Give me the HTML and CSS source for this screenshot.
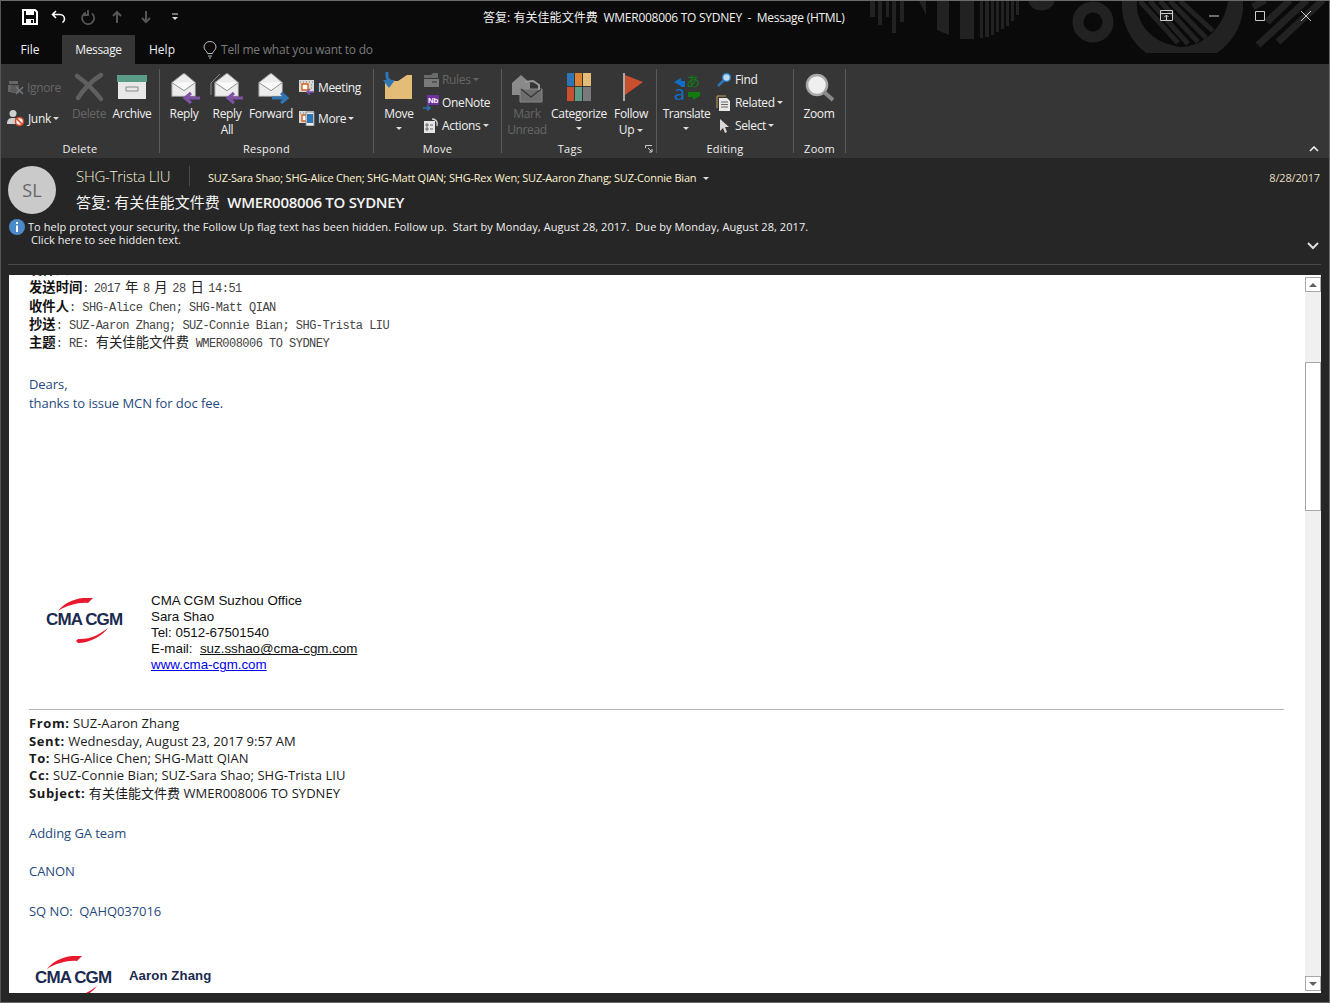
FILE: index.html
```html
<!DOCTYPE html>
<html>
<head>
<meta charset="utf-8">
<title>答复: 有关佳能文件费 WMER008006 TO SYDNEY - Message (HTML)</title>
<link rel="stylesheet" href="styles.css">
</head>
<body>
<svg class="defs" width="0" height="0">
  <defs>
    <symbol id="env" viewBox="0 0 32 32">
      <path d="M1 13 15 2h2l13 11v17H1z" fill="#ececec" stroke="#8a8a8a" stroke-width="1.200"/>
      <path d="M1 13l15 10 14-10" fill="#fafafa" stroke="#8a8a8a" stroke-width="1.200"/>
    </symbol>
    <symbol id="mini" viewBox="0 0 16 16">
      <path d="M0 1h15v12H0z" fill="#d8d8d8"/>
      <path d="M3 5h6v6H3z" fill="#fff" stroke="#d0641e" stroke-width="1.400"/>
      <path d="M1 3h1M4 3h1M7 3h1M10 3h1M13 3h1M12 6h1M12 9h1" stroke="#777"/>
    </symbol>
    <symbol id="cmark" viewBox="0 0 80 48">
      <path d="M13 15C18 8 28 3 38 2L48 2 43 7C35 6 22 9 13 15z" fill="#e8192c"/>
      <path d="M31 45 33 47C45 47 57 40 63 32 55 38 45 44 33 43z" fill="#e8192c"/>
    </symbol>
  </defs>
</svg>
<div class="window">
  <div class="titlebar">
    <svg class="decor" width="470" height="64" viewBox="0 0 470 64">
      <g fill="#222">
        <path d="M10 1h5v16h-5zM18 1h4v24h-4zM26 1h3v16h-3zM32 1h4v32h-4zM40 1h4v21h-4z"/>
        <path d="M59 1h7v14zM77 1h12v34l-12-5zM100 1h14v38h-14zM120 1h3v37h-3zM125 1h4v36h-4zM131 1h3v34h-3zM136 1h3v31h-3zM141 1h3v28h-3zM146 1h3v25h-3zM151 1h3v20h-3zM156 1h3v14h-3z"/>
        <path d="M168 1h27a14 13 0 0 1-27 0z"/>
        <path d="M262 1h121v10a60 60 0 0 1-26 42h-71a60 60 0 0 1-24-52zM277 1C275 20 288 42 320 47 345 47 365 25 368 1z" fill-rule="evenodd"/>
      </g>
      <g stroke="#222" stroke-width="5" fill="none">
        <path d="M280 1l38 42M290 1l38 43M300 1l38 41M310 1l36 37M320 1l33 30"/>
      </g>
      <circle cx="233" cy="22" r="15" fill="none" stroke="#222" stroke-width="11"/>
      <g stroke="#222" stroke-width="7" fill="none">
        <path d="M393 7l12-7M407 22l23-22M398 45l49-45M418 42l45-42"/>
      </g>
    </svg>
    <div class="qat">
      <svg width="16" height="16" viewBox="0 0 16 16"><path d="M1 1h12l2 2v12H1z" fill="none" stroke="#fff" stroke-width="2"/><path d="M4 1h8v5H4zM4 10h8v5H4z" fill="#fff"/><path d="M9 11h2v3H9z" fill="#0a0a0a"/></svg>
      <svg width="16" height="16" viewBox="0 0 16 16"><path d="M5 2 1.500 5.500 5 9M2 5.500h7a4.500 4.500 0 0 1 4.500 4.500 4 4 0 0 1-2 3.500" fill="none" stroke="#fff" stroke-width="1.600"/></svg>
      <svg width="16" height="16" viewBox="0 0 16 16"><path d="M10 3.500a6 6 0 1 1-6 1M8 1v5h5" fill="none" stroke="#555" stroke-width="1.800" transform="matrix(-1 0 0 1 16 0)"/></svg>
      <svg width="16" height="16" viewBox="0 0 16 16"><path d="M8 14V3M4 7l4-4 4 4" fill="none" stroke="#555" stroke-width="2"/></svg>
      <svg width="16" height="16" viewBox="0 0 16 16"><path d="M8 2v11M4 9l4 4 4-4" fill="none" stroke="#555" stroke-width="2"/></svg>
      <svg width="16" height="16" viewBox="0 0 16 16"><path d="M5 5h6" stroke="#ddd"/><path d="M5 8h6l-3 3z" fill="#ddd"/></svg>
    </div>
    <div class="title-text"><span class="title-cn">答复: 有关佳能文件费</span>&nbsp; WMER008006 TO SYDNEY&nbsp; -&nbsp; Message (HTML)</div>
    <div class="winbtns">
      <svg width="14" height="12" viewBox="0 0 14 12"><path d="M.5.500h12v10H.500zM.5 3.500h12M6.500 10V5M4.500 7l2-2 2 2" fill="none" stroke="#ccc"/></svg>
      <svg width="12" height="12" viewBox="0 0 12 12"><path d="M1 6h10" stroke="#ccc"/></svg>
      <svg width="12" height="12" viewBox="0 0 12 12"><path d="M1.500 1.500h9v9h-9z" fill="none" stroke="#ccc"/></svg>
      <svg width="12" height="12" viewBox="0 0 12 12"><path d="M1 1l10 10M11 1 1 11" stroke="#ccc"/></svg>
    </div>
  </div>
  <div class="tabs">
    <span class="tab tab-file">File</span>
    <span class="tab tab-active">Message</span>
    <span class="tab tab-help">Help</span>
    <span class="tell">
      <svg width="14" height="18" viewBox="0 0 14 18"><path d="M4.500 12.500C4 10 1 9 1 6a6 5.500 0 0 1 12 0c0 3-3 4-3.500 6.500zM5 15h4M6 17h2" fill="none" stroke="#bbb"/></svg>
      Tell me what you want to do
    </span>
  </div>

  <div class="ribbon">
    <div class="group g-delete">
      <div class="group-body">
        <div class="col col-2 w62">
          <div class="small off">
            <svg width="18" height="16" viewBox="0 0 18 16"><path d="M2 2h9v3H2zM1 6h3v7H1z" fill="#666"/><path d="M4 6h8v8H4z" fill="#5a5a5a"/><path d="M9 8l7 7M16 8l-7 7" stroke="#777" stroke-width="1.500"/></svg>Ignore
          </div>
          <div class="small">
            <svg width="18" height="18" viewBox="0 0 18 18"><circle cx="6" cy="4.500" r="3.500" fill="#cfcfcf"/><path d="M0 15c0-5 2-6 6-6 2 0 3 .5 4 2v4z" fill="#cfcfcf"/><circle cx="12.500" cy="12.500" r="4" fill="#f4f4f4" stroke="#d24726" stroke-width="1.600"/><path d="M10 10l5 5" stroke="#d24726" stroke-width="1.600"/></svg>Junk<i class="caret"></i>
          </div>
        </div>
        <div class="big w40 off">
          <svg width="32" height="32" viewBox="0 0 32 32"><path d="M4 4Q18 14 28 27M28 3Q14 12 5 26" fill="none" stroke="#5f5f5f" stroke-width="4.500" stroke-linecap="round"/></svg>
          <span>Delete</span>
        </div>
        <div class="big w46">
          <svg width="32" height="32" viewBox="0 0 32 32"><path d="M1 3h30v7H1z" fill="#5c9b87"/><path d="M2 10h28v17H2z" fill="#e8e8e8"/><path d="M10 15h12v4H10z" fill="#e8e8e8" stroke="#888"/></svg>
          <span>Archive</span>
        </div>
      </div>
      <div class="group-label">Delete</div>
    </div>

    <div class="group g-respond">
      <div class="group-body">
        <div class="big w40">
          <svg width="32" height="32" viewBox="0 0 32 32"><use href="#env" x="3" width="26" height="26"/><path d="M32 26H18M23 21l-6 5 6 5" fill="none" stroke="#8052a5" stroke-width="3"/></svg>
          <span>Reply</span>
        </div>
        <div class="big w46">
          <svg width="36" height="32" viewBox="0 0 36 32"><path d="M2 23V11L11 2" fill="none" stroke="#888"/><use href="#env" x="5" width="26" height="26"/><path d="M34 26H20M25 21l-6 5 6 5" fill="none" stroke="#8052a5" stroke-width="3"/></svg>
          <span>Reply<br>All</span>
        </div>
        <div class="big w42">
          <svg width="32" height="32" viewBox="0 0 32 32"><use href="#env" x="3" width="26" height="26"/><path d="M17 26h14M26 21l6 5-6 5" fill="none" stroke="#2e75b6" stroke-width="3"/></svg>
          <span>Forward</span>
        </div>
        <div class="col col-2 pad7">
          <div class="small">
            <svg width="16" height="16" viewBox="0 0 16 16"><use href="#mini"/><path d="M15 13H8M11 10l-3 3 3 3" fill="none" stroke="#8052a5" stroke-width="1.500"/></svg>Meeting
          </div>
          <div class="small">
            <svg width="16" height="16" viewBox="0 0 16 16"><use href="#mini"/><path d="M7 2h8v14H7z" fill="#eee" stroke="#888"/><path d="M8 4h6v9H8z" fill="#2e75b6"/></svg>More<i class="caret"></i>
          </div>
        </div>
      </div>
      <div class="group-label">Respond</div>
    </div>

    <div class="group g-move">
      <div class="group-body">
        <div class="big w42">
          <svg width="32" height="32" viewBox="0 0 32 32"><path d="M2 9h13l9-6h5v24H2z" fill="#e3bd78"/><path d="M4 0v4a5 5 0 0 0 4 5" fill="none" stroke="#2e75b6" stroke-width="3"/><path d="M6 16 0 8h12z" fill="#2e75b6"/></svg>
          <span>Move<i class="caret block"></i></span>
        </div>
        <div class="col col-3">
          <div class="small off">
            <svg width="16" height="16" viewBox="0 0 16 16"><path d="M1 3h7l2-2h5v5H1z" fill="#6a6a6a"/><path d="M1 7h15v8H1z" fill="#7a7a7a"/><path d="M9 10h5" stroke="#333"/></svg>Rules<i class="caret"></i>
          </div>
          <div class="small">
            <svg width="16" height="16" viewBox="0 0 16 16"><path d="M4 0h12v10H4z" fill="#7030a0"/><path d="M0 13h6M4 10.500l3 2.500-3 2.500" fill="none" stroke="#2e75b6" stroke-width="1.500"/><text x="5" y="8" class="nb">Nb</text></svg>OneNote
          </div>
          <div class="small">
            <svg width="16" height="16" viewBox="0 0 16 16"><path d="M1 3h11v12H1z" fill="#e6e6e6"/><path d="M3 6h2v2H3zM3 10h2v2H3zM7 7h3M7 11h3" stroke="#666" fill="none"/><path d="M9 1c4 0 6 3 5 7" fill="none" stroke="#ccc" stroke-width="1.500"/></svg>Actions<i class="caret"></i>
          </div>
        </div>
      </div>
      <div class="group-label">Move</div>
    </div>

    <div class="group g-tags">
      <div class="group-body">
        <div class="big w42 off">
          <svg width="32" height="32" viewBox="0 0 32 32"><path d="M1 11 10 3l9 8v12H1z" fill="#8a8a8a"/><path d="M9 17h22v13H9z" fill="#6f6f6f" stroke="#8a8a8a"/><path d="M10 17l10 8 10-8" fill="none" stroke="#3a3a3a" stroke-width="1.500"/><path d="M14 10l8-1 6 4v5" fill="none" stroke="#9a9a9a" stroke-width="2"/></svg>
          <span>Mark<br>Unread</span>
        </div>
        <div class="big w62">
          <svg class="cats" width="24" height="28" viewBox="0 0 24 28"><path d="M0 0h7v13H0z" fill="#2e75b6"/><path d="M8 0h7v13H8z" fill="#dd8434"/><path d="M16 0h8v13h-8z" fill="#e3bd78"/><path d="M0 14h7v14H0z" fill="#c9502e"/><path d="M8 14h7v14H8z" fill="#5c9b87"/><path d="M16 14h8v14h-8z" fill="#7a7a7a"/></svg>
          <span>Categorize<i class="caret block"></i></span>
        </div>
        <div class="big w42">
          <svg width="32" height="32" viewBox="0 0 32 32"><path d="M8 1h2v28H8z" fill="#aaa"/><path d="M10 3 28 10 10 23z" fill="#c9502e"/></svg>
          <span>Follow<br>Up<i class="caret"></i></span>
        </div>
      </div>
      <div class="group-label label-tags">Tags
        <svg class="launcher" width="8" height="8" viewBox="0 0 8 8"><path d="M.5 3V.5H7M3 3l4 4M7 4v3H4" fill="none" stroke="#ccc"/></svg>
      </div>
    </div>

    <div class="group g-edit">
      <div class="group-body">
        <div class="big w50 translate">
          <svg width="32" height="32" viewBox="0 0 32 32"><path d="M4 10l7-4v3h4v6H11v-1z" fill="#0f6fc6"/><path d="M30 24l-7 4v-3h-5v-5h12z" fill="#107c10"/><text x="16" y="14" class="ja">あ</text><text x="4" y="28" class="lat">a</text></svg>
          <span>Translate<i class="caret block"></i></span>
        </div>
        <div class="col col-3 pad5">
          <div class="small">
            <svg width="16" height="16" viewBox="0 0 16 16"><circle cx="10.500" cy="5.500" r="4" fill="#bcd9f5" stroke="#2e75b6" stroke-width="1.500"/><path d="M7.500 8.500 2 14" stroke="#2e75b6" stroke-width="2.500"/></svg>Find
          </div>
          <div class="small">
            <svg width="16" height="16" viewBox="0 0 16 16"><path d="M1 13V1h9" fill="none" stroke="#c9a24f"/><path d="M3 3h8l3 3v10H3z" fill="#e8e8e8"/><path d="M5 7h7M5 9.500h7M5 12h7" stroke="#666"/></svg>Related<i class="caret"></i>
          </div>
          <div class="small">
            <svg width="16" height="16" viewBox="0 0 16 16"><path d="M4 1v12l3-3 2 5 2-1-2-5h4z" fill="#d8d8d8"/></svg>Select<i class="caret"></i>
          </div>
        </div>
      </div>
      <div class="group-label">Editing</div>
    </div>

    <div class="group g-zoom">
      <div class="group-body">
        <div class="big w44">
          <svg width="32" height="32" viewBox="0 0 32 32"><circle cx="14" cy="13" r="10" fill="#efefef" stroke="#a8a8a8" stroke-width="2.500"/><path d="M21 20l9 8" stroke="#8a8a8a" stroke-width="4"/></svg>
          <span>Zoom</span>
        </div>
      </div>
      <div class="group-label">Zoom</div>
    </div>

    <svg class="collapse" width="10" height="6" viewBox="0 0 10 6"><path d="M1 5l4-4 4 4" fill="none" stroke="#eee" stroke-width="1.600"/></svg>
  </div>

  <div class="msghead">
    <div class="avatar">SL</div>
    <div class="msgmeta">
      <div class="addr-row">
        <span class="sender">SHG-Trista LIU</span>
        <span class="recips">SUZ-Sara Shao; SHG-Alice Chen; SHG-Matt QIAN; SHG-Rex Wen; SUZ-Aaron Zhang; SUZ-Connie Bian<i class="caret wide"></i></span>
        <span class="date">8/28/2017</span>
      </div>
      <div class="subject"><span class="subject-cn">答复: 有关佳能文件费</span>&nbsp; <b>WMER008006 TO SYDNEY</b></div>
    </div>
  </div>
  <div class="info">
    <svg width="16" height="16" viewBox="0 0 16 16"><circle cx="8" cy="8" r="8" fill="#4a8ac9"/><path d="M7 3h2v2H7zM7 6.500h2V13H7z" fill="#fff"/></svg>
    <div class="info-text">
      <div>To help protect your security, the Follow Up flag text has been hidden. Follow up.&nbsp; Start by Monday, August 28, 2017.&nbsp; Due by Monday, August 28, 2017.</div>
      <div class="info-2">Click here to see hidden text.</div>
    </div>
    <svg class="chev" width="12" height="8" viewBox="0 0 12 8"><path d="M1 1l5 5 5-5" fill="none" stroke="#ddd" stroke-width="2"/></svg>
  </div>
  <div class="rule"></div>

  <div class="viewer">
    <div class="mail">
      <div class="sim sim-first"><b class="cjk">发件人</b></div>
      <div class="sim sim-date"><b class="cjk">发送时间</b>: 2017 <span class="cjk">年</span> 8 <span class="cjk">月</span> 28 <span class="cjk">日</span> 14:51</div>
      <div class="sim"><b class="cjk">收件人</b>: SHG-Alice Chen; SHG-Matt QIAN</div>
      <div class="sim"><b class="cjk">抄送</b>: SUZ-Aaron Zhang; SUZ-Connie Bian; SHG-Trista LIU</div>
      <div class="sim"><b class="cjk">主题</b>: RE: <span class="cjk">有关佳能文件费</span> WMER008006 TO SYDNEY</div>

      <div class="blue dears">Dears,</div>
      <div class="blue thanks">thanks to issue MCN for doc fee.</div>

      <div class="sig">
        <svg class="logo" width="80" height="48" viewBox="0 0 80 48">
          <use href="#cmark" width="80" height="48"/>
          <text x="1" y="29" class="logo-text">CMA CGM</text>
        </svg>
        <div class="sig-text">
          <div>CMA CGM Suzhou Office</div>
          <div>Sara Shao</div>
          <div>Tel: 0512-67501540</div>
          <div>E-mail:&nbsp; <u>suz.sshao@cma-cgm.com</u></div>
          <div><a class="link">www.cma-cgm.com</a></div>
        </div>
      </div>

      <div class="sep"></div>
      <div class="hdrs">
        <div><b>From:</b> SUZ-Aaron Zhang</div>
        <div><b>Sent:</b> Wednesday, August 23, 2017 9:57 AM</div>
        <div><b>To:</b> SHG-Alice Chen; SHG-Matt QIAN</div>
        <div><b>Cc:</b> SUZ-Connie Bian; SUZ-Sara Shao; SHG-Trista LIU</div>
        <div><b>Subject:</b> 有关佳能文件费 WMER008006 TO SYDNEY</div>
      </div>

      <div class="blue adding">Adding GA team</div>
      <div class="blue canon">CANON</div>
      <div class="blue sq">SQ NO:&nbsp; QAHQ037016</div>

      <div class="sig2">
        <svg class="logo" width="80" height="48" viewBox="0 0 80 48">
          <use href="#cmark" width="80" height="48"/>
          <text x="1" y="29" class="logo-text">CMA CGM</text>
        </svg>
        <b class="aaron">Aaron Zhang</b>
      </div>
    </div>
    <div class="scrollbar">
      <div class="sb-btn"><svg width="8" height="4" viewBox="0 0 8 4"><path d="M0 4l4-4 4 4z" fill="#606060"/></svg></div>
      <div class="sb-track"><div class="sb-thumb"></div></div>
      <div class="sb-btn"><svg width="8" height="4" viewBox="0 0 8 4"><path d="M0 0l4 4 4-4z" fill="#606060"/></svg></div>
    </div>
  </div>
</div>
</body>
</html>
```

FILE: styles.css
```css
html, body { margin: 0; padding: 0; }
body { font-family: "Open Sans", "Noto Sans CJK SC", sans-serif; font-size: 12px; color: #f0f0f0; background: #262626; }
.defs { position: absolute; }
b { font-weight: 700; }

.window { width: 1330px; height: 1003px; box-sizing: border-box; border: 1px solid #6a6a6a; border-left-color: #555; background: #262626; overflow: hidden; display: flex; flex-direction: column; }

/* title bar */
.titlebar { height: 32px; flex: none; background: #0a0a0a; display: flex; align-items: center; position: relative; }
.decor { position: absolute; left: 859px; top: -1px; }
.qat { display: flex; gap: 13px; padding-left: 21px; position: relative; }
.title-text { position: absolute; left: 482px; top: 7px; font-size: 12px; letter-spacing: -.27px; white-space: nowrap; color: #f0f0f0; }
.title-cn { letter-spacing: .05px; }
.winbtns { position: absolute; right: 17px; top: 9px; display: flex; gap: 34px; }

.tabs { height: 31px; flex: none; background: #0a0a0a; display: flex; align-items: stretch; font-size: 12px; }
.tab { display: flex; align-items: center; justify-content: center; width: 61px; padding-top: 2px; }
.tab-file { box-sizing: border-box; padding-right: 3px; }
.tab-active { background: #363636; width: 73px; margin-top: 2px; padding-top: 0; letter-spacing: -.35px; }
.tab-help { width: 54px; }
.tell { display: flex; align-items: center; gap: 4px; color: #7a7a7a; margin-left: 14px; padding-top: 2px; letter-spacing: -.22px; }

/* ribbon */
.ribbon { height: 94px; flex: none; background: #363636; display: flex; align-items: flex-start; position: relative; }
.group { height: 84px; margin-top: 5px; box-sizing: border-box; border-right: 1px solid #5a5a5a; display: flex; flex-direction: column; position: relative; }
.group-body { height: 72px; display: flex; }
.group-label { height: 16px; line-height: 16px; margin-bottom: -4px; text-align: center; font-size: 11px; letter-spacing: .3px; }
.label-tags { padding-right: 18px; }
.launcher { position: absolute; right: 3px; bottom: 0; }
.g-delete { width: 159px; } .g-delete .group-body { padding-left: 6px; }
.g-respond { width: 214px; } .g-respond .group-body { padding-left: 4px; }
.g-move { width: 128px; } .g-move .group-body { padding-left: 4px; }
.g-tags { width: 155px; } .g-tags .group-body { padding-left: 4px; }
.g-edit { width: 137px; } .g-edit .group-body { padding-left: 4px; }
.g-zoom { width: 52px; } .g-zoom .group-body { padding-left: 3px; }

.big { display: flex; flex-direction: column; align-items: center; flex: none; padding-top: 3px; }
.big svg { height: 32px; display: block; overflow: visible; }
.big span { display: block; margin-top: 2px; line-height: 16px; text-align: center; white-space: nowrap; letter-spacing: -.35px; }
.big .cats { height: 28px; margin: 1px 0 3px; }
.translate span { letter-spacing: -.5px; padding-left: 1px; }
.w40 { width: 40px; } .w42 { width: 42px; } .w44 { width: 44px; } .w46 { width: 46px; } .w50 { width: 50px; } .w62 { width: 62px; }
.off, .off span { color: #666; }

.col { display: flex; flex-direction: column; flex: none; }
.col-2 { padding-top: 3px; }
.col-2 .small { height: 30px; }
.col-2 .small + .small { margin-top: 1px; }
.col-2 .off { gap: 2px; }
.col-3 { margin-top: -1px; padding-left: 3px; }
.col-3 .small { height: 23px; }
.pad7 { padding-left: 7px; }
.pad5 { padding-left: 5px; }
.small { display: flex; align-items: center; gap: 3px; white-space: nowrap; letter-spacing: -.35px; }
.small svg { flex: none; }
.caret { display: inline-block; width: 0; height: 0; border: 3px solid transparent; border-top-color: #ddd; border-bottom: 0; margin-left: 3px; vertical-align: middle; }
.small .caret { margin-left: -1px; }
.caret.block { display: block; margin: 5px auto 0; }
.caret.wide { margin-left: 7px; }
.off .caret { border-top-color: #666; }
.nb { font: bold 8px "Liberation Sans", sans-serif; fill: #fff; }
.ja { font: 14px "Noto Sans CJK JP", sans-serif; fill: #107c10; }
.lat { font: 20px "Open Sans", sans-serif; fill: #0f6fc6; }
.collapse { position: absolute; right: 10px; top: 82px; }

/* message header */
.msghead { display: flex; padding: 8px 9px 0 7px; height: 51px; flex: none; background: #262626; }
.avatar { width: 48px; height: 48px; flex: none; border-radius: 50%; background: #cacaca; color: #666; font-size: 18px; display: flex; align-items: center; justify-content: center; }
.msgmeta { flex: 1; margin-left: 20px; }
.addr-row { display: flex; align-items: center; height: 20px; }
.sender { font-size: 15px; color: #f5efd7; font-weight: 300; width: 113px; height: 20px; line-height: 20px; border-right: 1px solid #4a4a4a; letter-spacing: -.25px; white-space: nowrap; flex: none; }
.recips { margin-left: 18px; padding-top: 2px; font-size: 11px; letter-spacing: -.21px; color: #fdf3d0; }
.date { margin-left: auto; padding-top: 2px; font-size: 11px; color: #e5dcc0; letter-spacing: -.15px; }
.subject { margin-top: 5px; font-size: 15px; line-height: 22px; letter-spacing: -.2px; color: #f5f5f5; white-space: nowrap; }
.subject-cn { letter-spacing: .1px; }
.subject b { font-weight: 600; letter-spacing: -.3px; }

.info { display: flex; height: 47px; flex: none; padding-left: 8px; position: relative; }
.info svg { flex: none; margin-top: 2px; }
.info-text { margin-left: 3px; font-size: 11px; line-height: 13px; padding-top: 3px; letter-spacing: .065px; }
.info-2 { margin-left: 3px; }
.info .chev { position: absolute; right: 10px; top: 25px; margin-top: 0; }
.rule { height: 1px; margin: 0 8px 0 7px; background: #4a4a4a; flex: none; }

/* reading pane */
.viewer { margin: 10px 8px 9px 8px; flex: 1; background: #fff; display: flex; overflow: hidden; min-height: 0; }
.mail { flex: 1; min-width: 0; padding-left: 20px; padding-right: 21px; color: #1a1a1a; overflow: hidden; }
.sim { font-family: "Liberation Mono", "Noto Sans CJK SC", monospace; font-size: 12px; letter-spacing: -.53px; height: 18.300px; line-height: 18.300px; color: #444; white-space: nowrap; }
.sim-first { margin-top: -15px; }
.sim-date { word-spacing: -2px; }
.cjk { font-family: "Noto Sans CJK SC", sans-serif; font-size: 13.330px; letter-spacing: 0; color: #222; }
b.cjk { color: #111; }
.blue { font-size: 13px; line-height: 19px; color: #1f497d; letter-spacing: -.06px; }
.dears { margin-top: 24px; }
.sig { display: flex; margin-top: 180px; }
.logo { flex: none; margin-top: 3px; margin-left: 16px; }
.logo-text { font: bold 17px "Liberation Sans", sans-serif; letter-spacing: -.9px; fill: #1b2a50; }
.sig-text { margin-left: 26px; font-family: "Liberation Sans", sans-serif; font-size: 13.350px; line-height: 16px; color: #111; }
.link { color: #0000ee; text-decoration: underline; }
.sep { height: 1px; margin-top: 36px; margin-right: 0; background: #b4b4b4; }
.hdrs { margin-top: 5px; font-size: 13px; line-height: 17.300px; letter-spacing: .04px; color: #1a1a1a; }
.hdrs b { font-weight: 700; letter-spacing: .6px; }
.adding { margin-top: 22px; }
.canon { margin-top: 19px; }
.sq { margin-top: 21px; }
.sig2 { display: flex; align-items: flex-start; margin-top: 33px; }
.sig2 .logo { margin-left: 5px; margin-top: 0; }
.aaron { margin-left: 15px; margin-top: 14px; font: bold 13.200px "Liberation Sans", sans-serif; color: #1b2a50; letter-spacing: .1px; }

.scrollbar { width: 16px; flex: none; margin: 2px 0; display: flex; flex-direction: column; background: #f0f0f0; }
.sb-btn { height: 15px; flex: none; box-sizing: border-box; border: 1px solid #a8a8a8; background: #fff; display: flex; align-items: center; justify-content: center; }
.sb-track { flex: 1; padding-top: 70px; }
.sb-thumb { height: 149px; box-sizing: border-box; border: 1px solid #a8a8a8; background: #fff; }
```
